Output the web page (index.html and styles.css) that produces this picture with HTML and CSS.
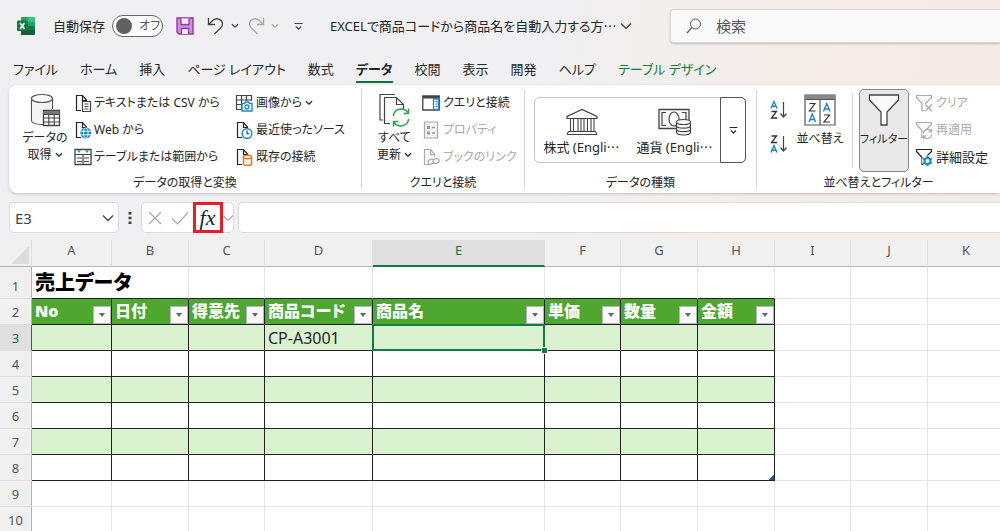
FILE: index.html
```html
<!DOCTYPE html>
<html lang="ja">
<head>
<meta charset="utf-8">
<meta name="viewport" content="width=device-width, initial-scale=1">
<title>EXCELで商品コードから商品名を自動入力する方法</title>
<link rel="stylesheet" href="styles.css">
</head>
<body>
<svg class="defs" aria-hidden="true">
  <symbol id="chev" viewBox="0 0 8 6"><path d="M1 1.2 4 4.2 7 1.2" fill="none" stroke="currentColor" stroke-width="1.3"/></symbol>
  <symbol id="more" viewBox="0 0 9 9"><path d="M.5 1.5h8M2 4.5l2.5 2.6L7 4.5" fill="none" stroke="currentColor" stroke-width="1.2"/></symbol>
  <symbol id="page" viewBox="0 0 18 18"><path d="M7 16.5H2.500v-15h6l4 4.500v3M8.500 1.500v5h4" fill="#fafafa" stroke="currentColor" stroke-width="1.200"/></symbol>
  <symbol id="funnel" viewBox="0 0 18 18"><path d="M1.500 1.500h15v2l-6 6v7h-3.500v-7l-5.500-6z" fill="#fafafa" stroke="currentColor" stroke-width="1.200"/></symbol>
</svg>
<div class="app">
  <header class="titlebar">
    <svg class="logo" viewBox="0 0 18 18"><path d="M4 0h13a1 1 0 0 1 1 1v16a1 1 0 0 1-1 1H4z" fill="#185c37"/><path d="M4 0h7v5H4z" fill="#21a366"/><path d="M11 0h6a1 1 0 0 1 1 1v4h-7z" fill="#33c481"/><path d="M4 5h7v4H4z" fill="#107c41"/><path d="M11 5h7v4h-7z" fill="#21a366"/><path d="M11 9h7v4h-7z" fill="#107c41"/><rect y="3.500" width="10.500" height="10.500" rx="1" fill="#107c41"/><path d="M3 6l4.500 6M7.500 6 3 12" stroke="#fff" stroke-width="1.600"/></svg>
    <label class="autosave"><span>自動保存</span><span class="switch"><input type="checkbox" role="switch"><span class="knob"></span><span class="off">オフ</span></span></label>
    <button class="tool save" aria-label="保存"><svg viewBox="0 0 18 18"><path d="M1 1h16v16H3l-2-2z" fill="#cf8fdc" stroke="#9b30ab" stroke-width="1.400"/><path d="M5 1.500v6h8v-6M5.500 17v-5.500h7V17" fill="#fff" stroke="#9b30ab" stroke-width="1.300"/></svg></button>
    <button class="tool undo" aria-label="元に戻す"><svg viewBox="0 0 18 18"><path d="M1.500 1v6.500H8M1.800 7.200 6 3.300C9.500.3 15 2 15.500 6.500c.2 2-.8 3.400-2 4.600L7.500 17" fill="none" stroke="currentColor" stroke-width="1.300"/></svg></button>
    <button class="tool drop" aria-label="元に戻す一覧"><svg class="chev" viewBox="0 0 8 6"><use href="#chev"/></svg></button>
    <button class="tool redo" aria-label="やり直し"><svg viewBox="0 0 18 18"><path d="M16.500 1v6.500H10M16.200 7.200 12 3.300C8.500.3 3 2 2.500 6.500c-.2 2 .8 3.400 2 4.600l6 5.900" fill="none" stroke="currentColor" stroke-width="1.300"/></svg></button>
    <button class="tool drop redo" aria-label="やり直し一覧"><svg class="chev" viewBox="0 0 8 6"><use href="#chev"/></svg></button>
    <button class="tool custom" aria-label="クイックアクセスのカスタマイズ"><svg class="more" viewBox="0 0 9 9"><use href="#more"/></svg></button>
    <button class="filename"><span>EXCELで商品コードから商品名を自動入力する方⋯</span><svg class="wide" viewBox="0 0 12 8"><path d="M1 1.500 6 6.500 11 1.500" fill="none" stroke="#333" stroke-width="1.200"/></svg></button>
    <label class="search"><svg viewBox="0 0 16 16"><circle cx="9.500" cy="6" r="5" fill="none" stroke="#555"/><path d="M6 9.500.8 15.200" stroke="#555" stroke-width="1.200"/></svg><input type="text" placeholder="検索" aria-label="検索"></label>
  </header>

  <nav class="tabs">
    <a href="#">ファイル</a><a href="#">ホーム</a><a href="#">挿入</a><a href="#">ページ レイアウト</a><a href="#">数式</a><a href="#" class="active" aria-current="page">データ</a><a href="#">校閲</a><a href="#">表示</a><a href="#">開発</a><a href="#">ヘルプ</a><a href="#" class="context">テーブル デザイン</a>
  </nav>

  <main>
  <section class="ribbon">
    <div class="group get">
      <div class="controls">
        <button class="big"><svg class="i34" viewBox="0 0 34 34"><path d="M3.500 5.500v22c0 2 4 3.600 10 4h2M24.500 5.500V16" fill="none" stroke="#555" stroke-width="1.200"/><path d="M4 6v21c0 2 4 4 11 4V17h9V6z" fill="#f4f4f4"/><ellipse cx="14" cy="5.500" rx="10.500" ry="4" fill="#fff" stroke="#555" stroke-width="1.200"/><path d="M15.500 17.500h16v15h-16z" fill="#fff" stroke="#444" stroke-width="1.300"/><path d="M15.500 18h16v3h-16z" fill="#777"/><path d="M15.500 21.500h16M15.500 25h16M15.500 29h16M20.800 21v11.500M26.200 21v11.500" stroke="#444" stroke-width="1.100"/></svg><span>データの<br>取得 <svg class="chev" viewBox="0 0 8 6"><use href="#chev"/></svg></span></button>
        <div class="stack one">
          <button><svg class="i18" viewBox="0 0 18 18"><use href="#page"/><path d="M8.500 7.500h8v10h-8z" fill="#fff" stroke="#444" stroke-width="1.200"/><path d="M10.500 10h4M10.500 12.500h4M10.500 15h4" stroke="#444"/></svg>テキストまたは CSV から</button>
          <button><svg class="i18" viewBox="0 0 18 18"><use href="#page"/><circle cx="11.800" cy="12" r="5.500" fill="#1a86d0"/><ellipse cx="11.800" cy="12" rx="2.300" ry="5" fill="none" stroke="#fff" stroke-width=".9"/><path d="M6.500 10.200h10.600M6.500 13.800h10.600" stroke="#fff" stroke-width=".9"/></svg>Web から</button>
          <button><svg class="i18" viewBox="0 0 18 18"><path d="M1 1.500h16v15H1z" fill="#fff" stroke="#444" stroke-width="1.300"/><path d="M1 6.500h16M3 10h5M3 13.500h5M10 10h5M10 13.500h5M9 6.500v10" stroke="#444" stroke-width="1.200"/><path d="M3 2.500h4L5 5zM11 2.500h4L13 5z" fill="#1a86d0"/></svg>テーブルまたは範囲から</button>
        </div>
        <div class="stack two">
          <button><svg class="i18" viewBox="0 0 18 18"><path d="M7 15.500H1.500v-14h15V7M1.500 6h15M1.500 10.500h5M6.500 1.500v14M11.500 1.500V7" fill="none" stroke="#444" stroke-width="1.200"/><path d="M7 9.500h2.500l1-1.500h3l1 1.500H17v7.500H7z" fill="#fff" stroke="#1a86d0" stroke-width="1.400"/><circle cx="12" cy="13" r="2" fill="none" stroke="#1a86d0" stroke-width="1.300"/></svg>画像から <svg class="chev" viewBox="0 0 8 6"><use href="#chev"/></svg></button>
          <button><svg class="i18" viewBox="0 0 18 18"><use href="#page"/><circle cx="12" cy="12.500" r="4.800" fill="#fff" stroke="#1a86d0" stroke-width="1.400"/><path d="M12 9.500v3.300h2.500" fill="none" stroke="#333" stroke-width="1.100"/></svg>最近使ったソース</button>
          <button><svg class="i18" viewBox="0 0 18 18"><use href="#page"/><path d="M8.500 9v7c0 2 8 2 8 0V9" fill="#fff" stroke="#e87511" stroke-width="1.500"/><ellipse cx="12.500" cy="9" rx="4" ry="1.700" fill="#fff" stroke="#e87511" stroke-width="1.400"/></svg>既存の接続</button>
        </div>
      </div>
      <div class="caption">データの取得と変換</div>
    </div>

    <div class="group query">
      <div class="controls">
        <button class="big"><svg class="i34" viewBox="0 0 34 34"><path d="M5 27H2V1.500h15" fill="none" stroke="#444" stroke-width="1.200"/><path d="M12 30.500H6.500v-26h12l7 7V16M18.500 4.500v7h7" fill="#fafafa" stroke="#444" stroke-width="1.200"/><circle cx="23" cy="24.500" r="8.500" fill="#fff"/><path d="M15.300 23a8 8 0 0 1 14.500-3.500M30.700 26a8 8 0 0 1-14.500 3.500M30.500 15.500v5h-5M15.500 33.500v-5h5" fill="none" stroke="#2ba24a" stroke-width="1.500"/></svg><span>すべて<br>更新 <svg class="chev" viewBox="0 0 8 6"><use href="#chev"/></svg></span></button>
        <div class="stack">
          <button><svg class="i18" viewBox="0 0 18 18"><path d="M.8 2h16.400v14H.8z" fill="#fff" stroke="#444" stroke-width="1.300"/><path d="M1 2h16v2.500H1z" fill="#444"/><path d="M11.500 5h5v10.500h-5z" fill="#fff" stroke="#1a86d0" stroke-width="1.300"/><path d="M13.500 7.500h2M13.500 10h2M13.500 12.500h2" stroke="#1a86d0" stroke-width="1.200"/></svg>クエリと接続</button>
          <button disabled><svg class="i18" viewBox="0 0 18 18"><path d="M2.500 1h13v16h-13z" fill="#f3f3f3" stroke="#aaa" stroke-width="1.200"/><path d="M5 5h3v3H5zM5 10.500h3v3H5z" fill="#999"/><path d="M10 6.500h3M10 12h3" stroke="#999" stroke-width="1.300"/></svg>プロパティ</button>
          <button disabled><svg class="i18" viewBox="0 0 18 18"><use href="#page"/><g transform="rotate(-20 12 13)" fill="#fff" stroke="#aaa" stroke-width="1.300"><rect x="6" y="10.500" width="6" height="4.500" rx="2.200"/><rect x="11" y="11.500" width="6" height="4.500" rx="2.200"/></g></svg>ブックのリンク</button>
        </div>
      </div>
      <div class="caption">クエリと接続</div>
    </div>

    <div class="group types">
      <div class="controls">
        <div class="gallery">
          <button><svg class="i32" viewBox="0 0 32 28"><path d="M1 10.500v-2L16 1.500l15 7v2z" fill="#fafafa" stroke="#444" stroke-width="1.200"/><path d="M4.500 10.500v13M7.500 10.500v13M12 10.500v13M15 10.500v13M18 10.500v13M21.500 10.500v13M25 10.500v13M28 10.500v13M2.500 23.500h27M1 26.500h30M2.500 23.500 1 26.500M29.500 23.500l1.500 3" stroke="#444" stroke-width="1.100"/></svg><span>株式 (Engli⋯</span></button>
          <button><svg class="i34w" viewBox="0 0 34 28"><path d="M1 1.500h30v19H1z" fill="#fafafa" stroke="#444" stroke-width="1.300"/><path d="M8 4.500H4v13h4M24 4.500h4v8" fill="none" stroke="#444" stroke-width="1.200"/><ellipse cx="16" cy="11" rx="5" ry="7" fill="#fff" stroke="#444" stroke-width="1.200"/><path d="M18.500 14v10c0 4 14 4 14 0V14" fill="#fafafa" stroke="#444" stroke-width="1.200"/><ellipse cx="25.500" cy="14" rx="7" ry="2.500" fill="#fff" stroke="#444" stroke-width="1.200"/><path d="M18.500 17.500c0 3.500 14 3.500 14 0M18.500 21c0 3.500 14 3.500 14 0" fill="none" stroke="#444" stroke-width="1.100"/></svg><span>通貨 (Engli⋯</span></button>
          <button class="expand" aria-label="その他"><svg class="more" viewBox="0 0 9 9"><use href="#more"/></svg></button>
        </div>
      </div>
      <div class="caption">データの種類</div>
    </div>

    <div class="group sort">
      <div class="controls">
        <div class="sorts">
          <button aria-label="昇順"><svg viewBox="0 0 20 20"><path d="M2 8.500 5 1.500l3 7M3 6.300h4" fill="none" stroke="#1a86d0" stroke-width="1.400"/><path d="M2.500 11.500h5l-5 6.500h5.500" fill="none" stroke="#333" stroke-width="1.300"/><path d="M14.500 2v15M11.500 13.500l3 3.500 3-3.500" fill="none" stroke="#444" stroke-width="1.200"/></svg></button>
          <button aria-label="降順"><svg viewBox="0 0 20 20"><path d="M2.500 2h5l-5 6.500H8" fill="none" stroke="#333" stroke-width="1.300"/><path d="M2 18.500l3-7 3 7M3 16.300h4" fill="none" stroke="#1a86d0" stroke-width="1.400"/><path d="M14.500 2v15M11.500 13.500l3 3.500 3-3.500" fill="none" stroke="#444" stroke-width="1.200"/></svg></button>
        </div>
        <button class="big narrow"><svg class="i32" viewBox="0 0 32 32"><path d="M1 1h30v30H1z" fill="#fff" stroke="#555" stroke-width="1.200"/><path d="M1 1h30v4.500H1z" fill="#888"/><path d="M16 5.500V31M1 5.500h30" stroke="#555" stroke-width="1.200"/><path d="M5.500 9.500H11l-5.500 7.500h6M20 21h5.500L20 28h6" fill="none" stroke="#333" stroke-width="1.200"/><path d="M5 28l3.300-8 3.300 8M6 25.500h4.500M19.500 17.500l3.300-8 3.300 8M20.500 15h4.500" fill="none" stroke="#1a86d0" stroke-width="1.400"/></svg><span>並べ替え</span></button>
        <div class="divider"></div>
        <button class="big filter" aria-pressed="true"><svg class="i32" viewBox="0 0 32 32"><path d="M1.500 1h29v5L19 18v13h-6V18L1.500 6z" fill="#fafafa" stroke="#444" stroke-width="1.300"/></svg><span>フィルター</span></button>
        <div class="stack">
          <button disabled><svg class="i18" viewBox="0 0 18 18"><use href="#funnel"/><path d="M9 10h9v8H9z" fill="#fff"/><path d="M10.500 10.500l6.500 6.500M17 10.500 10.500 17" stroke="#aaa" stroke-width="1.300"/></svg>クリア</button>
          <button disabled><svg class="i18" viewBox="0 0 18 18"><use href="#funnel"/><circle cx="12.500" cy="13" r="5" fill="#fff"/><path d="M8.500 12.500a4 4 0 0 1 7.500-2M16.500 13.500a4 4 0 0 1-7.500 2M16.500 8v3h-3M8.500 18v-3h3" fill="none" stroke="#aaa" stroke-width="1.200"/></svg>再適用</button>
          <button class="adv"><svg class="i18" viewBox="0 0 18 18"><use href="#funnel"/><circle cx="12.500" cy="13" r="5.500" fill="#fff"/><circle cx="12.500" cy="13" r="3" fill="#fff" stroke="#1a86d0" stroke-width="2"/><path d="M12.500 8v2M12.500 16v2M8.200 10.500l1.700 1M15.100 14.500l1.700 1M8.200 15.500l1.700-1M15.100 11.500l1.700-1" stroke="#1a86d0" stroke-width="2"/></svg>詳細設定</button>
        </div>
      </div>
      <div class="caption">並べ替えとフィルター</div>
    </div>
  </section>

  <section class="formula">
    <div class="namebox"><input type="text" value="E3" aria-label="名前ボックス"><button aria-label="名前一覧"><svg class="wide" viewBox="0 0 12 8"><path d="M1 1.500 6 6.500 11 1.500" fill="none" stroke="#444" stroke-width="1.300"/></svg></button></div>
    <svg class="dots" viewBox="0 0 4 14"><path d="M.5 1h3v2.500h-3zM.5 5.700h3v2.500h-3zM.5 10.500h3V13h-3z" fill="#444"/></svg>
    <div class="fxbox">
      <button aria-label="キャンセル"><svg class="mark" viewBox="0 0 18 14"><path d="M3 1l12 12M15 1 3 13" stroke="#aaa" stroke-width="1.200"/></svg></button>
      <button aria-label="入力"><svg class="mark" viewBox="0 0 18 14"><path d="M1 7.500 6.500 13 17 1.500" fill="none" stroke="#aaa" stroke-width="1.200"/></svg></button>
      <button class="fx" aria-label="関数の挿入">fx</button>
      <button class="fxdrop" aria-label="関数一覧"><svg class="wide" viewBox="0 0 12 8"><path d="M1 1.500 6 6.500 11 1.500" fill="none" stroke="#aaa" stroke-width="1.200"/></svg></button>
    </div>
    <input class="bar" type="text" aria-label="数式バー">
  </section>

  <div class="sheetwrap">
  <table class="sheet">
    <colgroup><col class="cr"><col class="c80"><col class="c77"><col class="c76"><col class="c108"><col class="c172"><col class="c76"><col class="c77"><col class="c77"><col class="c76"><col class="c77"><col class="c77"></colgroup>
    <thead><tr><th class="corner"><svg viewBox="0 0 20 20"><path d="M20 0v20H0z" fill="#dcdcdc"/></svg></th><th>A</th><th>B</th><th>C</th><th>D</th><th class="sel">E</th><th>F</th><th>G</th><th>H</th><th>I</th><th>J</th><th>K</th></tr></thead>
    <tbody>
      <tr class="title"><th>1</th><td colspan="2" class="heading">売上データ</td><td></td><td></td><td></td><td></td><td></td><td></td><td></td><td></td><td></td></tr>
      <tr class="fields"><th>2</th>
        <td><div>No<button aria-label="No フィルター"></button></div></td><td><div>日付<button aria-label="日付 フィルター"></button></div></td><td><div>得意先<button aria-label="得意先 フィルター"></button></div></td><td><div>商品コード<button aria-label="商品コード フィルター"></button></div></td><td><div>商品名<button aria-label="商品名 フィルター"></button></div></td><td><div>単価<button aria-label="単価 フィルター"></button></div></td><td><div>数量<button aria-label="数量 フィルター"></button></div></td><td><div>金額<button aria-label="金額 フィルター"></button></div></td><td></td><td></td><td></td></tr>
      <tr class="data band"><th class="sel">3</th><td></td><td></td><td></td><td>CP-A3001</td><td class="active"></td><td></td><td></td><td></td><td></td><td></td><td></td></tr>
      <tr class="data"><th>4</th><td></td><td></td><td></td><td></td><td></td><td></td><td></td><td></td><td></td><td></td><td></td></tr>
      <tr class="data band"><th>5</th><td></td><td></td><td></td><td></td><td></td><td></td><td></td><td></td><td></td><td></td><td></td></tr>
      <tr class="data"><th>6</th><td></td><td></td><td></td><td></td><td></td><td></td><td></td><td></td><td></td><td></td><td></td></tr>
      <tr class="data band"><th>7</th><td></td><td></td><td></td><td></td><td></td><td></td><td></td><td></td><td></td><td></td><td></td></tr>
      <tr class="data"><th>8</th><td></td><td></td><td></td><td></td><td></td><td></td><td></td><td class="end"></td><td></td><td></td><td></td></tr>
      <tr><th>9</th><td></td><td></td><td></td><td></td><td></td><td></td><td></td><td></td><td></td><td></td><td></td></tr>
      <tr><th>10</th><td></td><td></td><td></td><td></td><td></td><td></td><td></td><td></td><td></td><td></td><td></td></tr>
    </tbody>
  </table>
  </div>
  </main>
</div>
</body>
</html>
```
FILE: styles.css
```css
* { box-sizing: border-box; }
html, body { margin: 0; height: 100%; }
body {
  overflow: hidden;
  color: #262626;
  font: 13px/20px "Noto Sans", "Noto Sans CJK JP", sans-serif;
  font-feature-settings: "palt";
  background: linear-gradient(100deg, #f0f0f2 0%, #f0f0f2 50%, #f3ede9 72%, #f4ebe4 100%);
}
button, input { font: inherit; font-feature-settings: inherit; color: inherit; border: 0; background: none; padding: 0; margin: 0; min-width: 0; outline: 0; }
button { display: flex; align-items: center; white-space: nowrap; }
svg { flex: none; display: block; }
.defs { position: absolute; width: 0; height: 0; }
.chev { width: 8px; height: 6px; }
.more { width: 9px; height: 9px; }
.wide { width: 12px; height: 8px; }

/* title bar */
.titlebar { display: flex; align-items: center; height: 52px; padding-left: 17px; }
.logo { width: 18px; height: 18px; }
.autosave { display: flex; align-items: center; gap: 7px; margin-left: 18px; }
.switch { display: flex; align-items: center; gap: 7px; width: 51px; height: 22px; padding-left: 3px; border: 1px solid #666; border-radius: 11px; background: #fff; position: relative; font-size: 12px; color: #555; }
.switch input { position: absolute; inset: 0; opacity: 0; }
.knob { width: 16px; height: 16px; border-radius: 50%; background: #616161; }
.tool svg:not(.chev):not(.more) { width: 18px; height: 18px; }
.tool { color: #444; }
.save { margin-left: 13px; }
.undo { margin-left: 13px; }
.drop { margin-left: 6px; }
.tool.redo { color: #aaa; }
.undo + .drop + .redo { margin-left: 8px; }
.custom { margin-left: 15px; }
.filename { margin-left: 27px; width: 302px; justify-content: space-between; }
.search { display: flex; align-items: center; gap: 14px; flex: 1; height: 34px; margin-left: 38px; padding-left: 15px; border: 1px solid #ddd9d7; border-right: 0; border-radius: 4px 0 0 4px; background: #fafafa; box-shadow: 0 1px 2px #0003; font-size: 15px; }
.search svg { width: 16px; height: 16px; }
.search input { flex: 1; }
.search input::placeholder { color: #555; opacity: 1; }

/* tabs */
.tabs { display: flex; gap: 22px; height: 33px; padding: 5px 13px 0; line-height: 24px; }
.tabs a { color: inherit; text-decoration: none; white-space: nowrap; height: 26px; }
.tabs .active { font-weight: 700; border-bottom: 2px solid #0f703b; }
.tabs .context { color: #107c41; }

/* ribbon */
.ribbon { display: flex; height: 108px; margin-left: 9px; padding: 4px 0; background: #fff; border-radius: 8px 0 0 8px; box-shadow: 0 1px 3px #0003; font-size: 12px; }
.group { display: flex; flex-direction: column; border-right: 1px solid #d6d6d6; }
.group:last-child { flex: 1; border-right: 0; }
.get { flex: 0 0 353px; }
.query { flex: 0 0 163px; }
.types { flex: 0 0 232px; }
.controls { display: flex; flex: none; height: 84px; }
.caption { flex: none; height: 16px; line-height: 20px; text-align: center; }
.stack { display: flex; flex-direction: column; }
.stack button { height: 27px; gap: 3px; }
.stack button:disabled { color: #aaa; }
.one { width: 161px; }
.one button { gap: 2px; }
.big { flex-direction: column; text-align: center; line-height: 17px; padding-top: 4px; gap: 2px; }
.get .big { width: 65px; padding-left: 7px; }
.query .big { width: 60px; padding-left: 5px; }
.big .chev { display: inline-block; vertical-align: 1px; }
.i34 { width: 34px; height: 34px; }
.i34w { width: 34px; height: 28px; }
.i32 { width: 32px; }
.i18 { width: 18px; height: 18px; }
.gallery { display: flex; width: 212px; height: 66px; margin: 8px 0 0 9px; border: 1px solid #c8c8c8; border-radius: 5px; font-size: 13px; }
.gallery button { flex: 1; flex-direction: column; justify-content: flex-end; gap: 1px; padding-bottom: 5px; }
.gallery .expand { flex: 0 0 26px; justify-content: center; padding: 0; margin: -1px; border: 1px solid #555; border-radius: 0 5px 5px 0; }
.sorts { display: flex; flex-direction: column; gap: 14px; padding: 11px 0 0 12px; }
.sorts svg { width: 20px; height: 20px; }
.narrow { width: 56px; margin-left: 3px; }
.sort .big { gap: 4px; padding-top: 5px; }
.divider { width: 1px; height: 75px; margin: 4px 6px 0 4px; background: #d6d6d6; }
.filter { width: 50px; height: 83px; margin-right: 6px; border: 1px solid #888; border-radius: 5px; background: #e9e9e9; font-size: 11px; }
.sort .filter { padding-top: 4px; }
.adv { font-size: 13px; }

/* formula bar */
.formula { display: flex; align-items: center; height: 47px; padding: 2px 0 0 9px; }
.namebox, .fxbox, .bar { height: 31px; background: #fff; border: 1px solid #dcdcdc; border-radius: 5px; }
.namebox { display: flex; align-items: center; width: 110px; padding: 0 4px 0 5px; font-size: 15px; color: #444; }
.namebox input { flex: 1; }
.dots { width: 4px; height: 14px; margin: 0 9px; }
.fxbox { display: flex; align-items: center; width: 93px; padding-left: 4px; }
.mark { width: 18px; height: 14px; }
.fxbox button + button { margin-left: 8px; }
.fxbox .fx { flex: 0 0 30px; height: 31px; margin-left: 4px; border: 3px solid #ed1c24; justify-content: center; font: italic 22px/20px "Liberation Serif", serif; color: #222; }
.fxbox .fxdrop { margin-left: -1px; }
.bar { flex: 1; margin-left: 4px; border-right: 0; border-radius: 5px 0 0 5px; padding: 0 8px; }

/* worksheet */
.sheetwrap { overflow: hidden; background: #fff; }
.sheet { table-layout: fixed; width: 1005px; border-collapse: separate; border-spacing: 0; background: #fff; }
.cr { width: 32px; }
.c76 { width: 76px; }
.c77 { width: 77px; }
.c80 { width: 80px; }
.c108 { width: 108px; }
.c172 { width: 172px; }
.sheet th { height: 26px; padding: 0; font-weight: 400; background: #f0f0f0; color: #555; border-right: 1px solid #dedede; border-bottom: 1px solid #dedede; line-height: 20px; }
.sheet thead th { height: 27px; border-bottom-color: #b5b5b5; padding: 1px 0 0; line-height: 18px; vertical-align: top; }
.sheet thead .corner { padding: 6px 1px 1px 10px; }
.corner svg { width: 20px; height: 18px; }
.sheet tbody th { border-right-color: #b5b5b5; vertical-align: bottom; padding-bottom: 2px; }
.sheet thead .sel { background: #e0e0e0; color: #107c41; border-bottom: 2px solid #107c41; }
.sheet tbody .sel { background: #e0e0e0; color: #107c41; border-right-color: #107c41; }
.sheet td { height: 26px; padding: 0 0 0 3px; border-right: 1px solid #e4e4e4; border-bottom: 1px solid #e4e4e4; white-space: nowrap; }
.title td, .title th { height: 32px; }
.sheet .title td:nth-child(-n+8) { border-bottom-color: #222; }
.heading { font-size: 20px; font-weight: 900; color: #000; line-height: 28px; }
.fields td:nth-child(-n+9) { background: #4ea72e; color: #fff; font-size: 16px; font-weight: 900; border-color: #222; }
.fields div { display: flex; align-items: flex-end; justify-content: space-between; height: 25px; line-height: 25px; }
.fields button { width: 18px; height: 18px; justify-content: center; background: #fafafc; border: 1px solid #b5b5c5; }
.fields button::before { content: ""; border: 3px solid transparent; border-top: 4px solid #666; border-bottom: 0; }
.data td:nth-child(-n+9) { border-color: #222; font-size: 16px; line-height: 20px; }
.band td:nth-child(-n+9) { background: #daf2d0; }
.sheet .active, .end { position: relative; }
.sheet .active::before { content: ""; position: absolute; inset: -1px; border: 2px solid #107c41; }
.sheet .active::after { content: ""; position: absolute; right: -3px; bottom: -3px; width: 5px; height: 5px; background: #107c41; outline: 1px solid #fff; }
.end::after { content: ""; position: absolute; right: 0; bottom: 0; width: 6px; height: 6px; background: linear-gradient(135deg, transparent 50%, #3050b0 50%); }
```
